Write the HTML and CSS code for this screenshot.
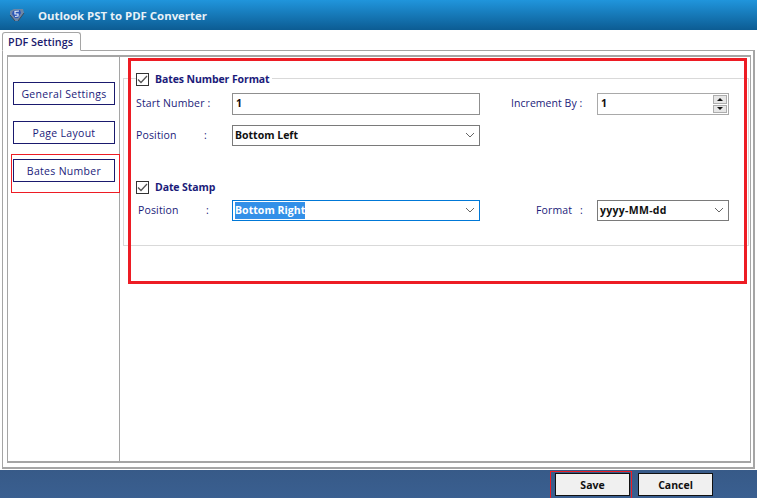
FILE: index.html
```html
<!DOCTYPE html>
<html lang="en">
<head>
<meta charset="utf-8">
<title>Outlook PST to PDF Converter</title>
<link rel="stylesheet" href="styles.css">
</head>
<body>
<div class="app">
  <header class="titlebar">
    <svg class="logo" width="16" height="14" viewBox="0 0 16 14"><path d="M1 3 L5 1 L14 1 L15 5 L9 13 L6 13 L1 7 Z" fill="#6d87a8"/><path d="M4 3 L11 2 L12 5 L9 10 L6 10 L3 6 Z" fill="#2b55b8"/><path d="M10 3 L6 3.5 L6 6 L9 6 L9 8 L6 8.5" fill="none" stroke="#e6eef6" stroke-width="1.2"/><path d="M1 7 L6 13 M15 5 L9 13" stroke="#3d4a5a" stroke-width="1" fill="none"/></svg>
    <span class="app-title">Outlook PST to PDF Converter</span>
  </header>
  <div class="tabstrip"><div class="tab">PDF Settings</div></div>
  <main class="page">
    <div class="inner">
      <nav class="side">
        <button class="nav-btn">General Settings</button>
        <button class="nav-btn">Page Layout</button>
        <button class="nav-btn nav-active">Bates Number</button>
      </nav>
      <section class="content">
        <div class="group">
          <div class="legend">
            <span class="check"><svg width="11" height="9" viewBox="0 0 11 9"><path d="M1 4.5 L4 7.5 L10 1" fill="none" stroke="#555" stroke-width="1.3"/></svg></span>
            <span class="legend-text">Bates Number Format</span>
          </div>
          <div class="row row-a">
            <label class="lbl lbl-start">Start Number :</label>
            <div class="input input-wide">1</div>
            <label class="lbl lbl-inc">Increment By :</label>
            <div class="input spin">1
              <span class="spin-btns">
                <span class="spin-btn"><i class="up"></i></span>
                <span class="spin-btn"><i class="down"></i></span>
              </span>
            </div>
          </div>
          <div class="row row-b">
            <label class="lbl lbl-pos1"><span>Position</span><span>:</span></label>
            <div class="select input-wide">Bottom Left<svg class="chev" width="10" height="6" viewBox="0 0 10 6"><path d="M1 1 L5 5 L9 1" fill="none" stroke="#666" stroke-width="1"/></svg></div>
          </div>
          <div class="legend legend-date">
            <span class="check"><svg width="11" height="9" viewBox="0 0 11 9"><path d="M1 4.5 L4 7.5 L10 1" fill="none" stroke="#555" stroke-width="1.3"/></svg></span>
            <span class="legend-text">Date Stamp</span>
          </div>
          <div class="row row-c">
            <label class="lbl lbl-pos2"><span>Position</span><span>:</span></label>
            <div class="select input-wide focus"><span class="sel-text">Bottom Right</span><svg class="chev" width="10" height="6" viewBox="0 0 10 6"><path d="M1 1 L5 5 L9 1" fill="none" stroke="#666" stroke-width="1"/></svg></div>
            <label class="lbl lbl-fmt"><span>Format</span><span>:</span></label>
            <div class="select select-fmt"><span class="fmt-text">yyyy-MM-dd</span><svg class="chev" width="10" height="6" viewBox="0 0 10 6"><path d="M1 1 L5 5 L9 1" fill="none" stroke="#666" stroke-width="1"/></svg></div>
          </div>
        </div>
        <div class="mark mark-form"></div>
      </section>
      <div class="mark mark-nav"></div>
    </div>
  </main>
  <footer class="footer">
    <div class="save-wrap"><button class="foot-btn">Save</button></div>
    <button class="foot-btn cancel">Cancel</button>
  </footer>
</div>
</body>
</html>
```

FILE: styles.css
```css
* { box-sizing: border-box; }
html, body { margin: 0; padding: 0; }
body { width: 757px; height: 498px; overflow: hidden; background: #fff; font-family: "Open Sans", "Noto Sans", sans-serif; font-size: 10.5px; color: #1b1b7a; }
.app { display: flex; flex-direction: column; width: 757px; height: 498px; }
.titlebar { height: 30px; flex: none; display: flex; align-items: center; padding-left: 9px; background: linear-gradient(#2095dc, #0c5c93); color: #e8f2f8; }
.logo { margin-right: 13px; }
.app-title { font-weight: 700; font-size: 11.4px; }
.tabstrip { height: 20px; flex: none; padding: 2px 0 0 2px; background: #fff; }
.tab { width: 79px; height: 19px; border: 1px solid #a5a5a5; border-bottom: 1px solid #fff; border-radius: 3px 3px 0 0; background: #fff; font-weight: 600; font-size: 10.8px; color: #1b1b6e; padding: 1px 0 0 5px; position: relative; z-index: 1; }
.page { margin-left: 2px; margin-right: 2px; height: 419px; flex: none; border: 1px solid #a5a5a5; border-right-width: 2px; border-bottom-width: 2px; padding: 4px 2px 4px 4px; background: #fff; }
.inner { position: relative; display: flex; height: 100%; border: 1px solid #a5a5a5; border-width: 2px 1px 2px 1px; }
.side { width: 112px; flex: none; border-right: 1px solid #a5a5a5; padding: 25px 0 0 5px; display: flex; flex-direction: column; gap: 16px; }
.nav-btn { width: 102px; height: 23px; border: 1px solid #1a1a6e; background: #fff; font: inherit; color: #1b1b7a; padding: 0; letter-spacing: 0.3px; }
.nav-active { margin-top: -1px; }
.content { position: relative; flex: 1; padding: 21px 0 0 3px; }
.group { width: 626px; height: 168px; border: 1px solid #d9d9d9; position: relative; }
.legend { position: absolute; left: 12px; top: -7px; display: flex; align-items: center; background: #fff; padding-right: 2px; }
.legend-date { top: 101px; }
.check { width: 13px; height: 13px; border: 1px solid #333; display: flex; align-items: center; justify-content: center; margin-right: 6px; background: #fff; }
.legend-text { font-weight: 700; letter-spacing: -0.1px; }
.row { display: flex; align-items: center; position: absolute; left: 0; right: 0; }
.row-a { top: 14px; height: 22px; }
.row-b { top: 46px; height: 21px; }
.row-c { top: 121px; height: 21px; }
.lbl { display: flex; justify-content: space-between; letter-spacing: 0.15px; white-space: nowrap; position: relative; top: -1px; }
.lbl-start { margin-left: 12px; width: 74px; margin-right: 22px; }
.lbl-pos1 { margin-left: 12px; width: 71px; margin-right: 25px; }
.lbl-pos2 { margin-left: 14px; width: 71px; margin-right: 23px; }
.lbl-inc { margin-left: 31px; width: 72px; margin-right: 14px; letter-spacing: 0.05px; }
.lbl-fmt { margin-left: 56px; width: 47px; margin-right: 14px; }
.input, .select { color: #111; font-weight: 700; font-size: 10.5px; background: #fff; display: flex; align-items: center; position: relative; line-height: 17px; }
.input { border: 1px solid #8f8f8f; padding: 0 0 2px 3px; height: 22px; }
.select { border: 1px solid #7a7a7a; padding: 0 0 0 2px; height: 21px; }
.input-wide { width: 248px; }
.spin { width: 132px; border: 1px solid #a9a9a9; }
.spin-btns { position: absolute; right: 1px; top: 1px; bottom: 1px; width: 14px; display: flex; flex-direction: column; gap: 1px; }
.spin-btn { flex: 1; background: #e6e6e6; border: 1px solid #adadad; display: flex; align-items: center; justify-content: center; }
.up { width: 0; height: 0; border-left: 3px solid transparent; border-right: 3px solid transparent; border-bottom: 3px solid #111; }
.down { width: 0; height: 0; border-left: 3px solid transparent; border-right: 3px solid transparent; border-top: 3px solid #111; }
.chev { position: absolute; right: 4px; top: 6px; }
.focus { border: 1px solid #0078d7; }
.sel-text { background: #3390e8; color: #fff; letter-spacing: 0.05px; }
.fmt-text { letter-spacing: 0.3px; }
.select-fmt { width: 132px; }
.mark { position: absolute; pointer-events: none; }
.mark-form { left: 8px; top: 1px; width: 619px; height: 226px; border: 3px solid #ed1c24; }
.mark-nav { left: 3px; top: 97px; width: 109px; height: 39px; border: 1px solid #ed1c24; }
.footer { flex: 1; margin-top: 1px; background: linear-gradient(#375a88, #3a5f90); display: flex; align-items: flex-start; padding-left: 550px; }
.save-wrap { width: 82px; height: 27px; margin-top: 1px; border: 1px solid #ed1c24; border-bottom: 0; padding: 1px 0 0 4px; }
.foot-btn { width: 75px; height: 23px; background: #f0f0f0; border: 1px solid #111; font: inherit; font-weight: 700; color: #111; padding: 0; display: block; }
.cancel { margin: 3px 0 0 6px; }
```
